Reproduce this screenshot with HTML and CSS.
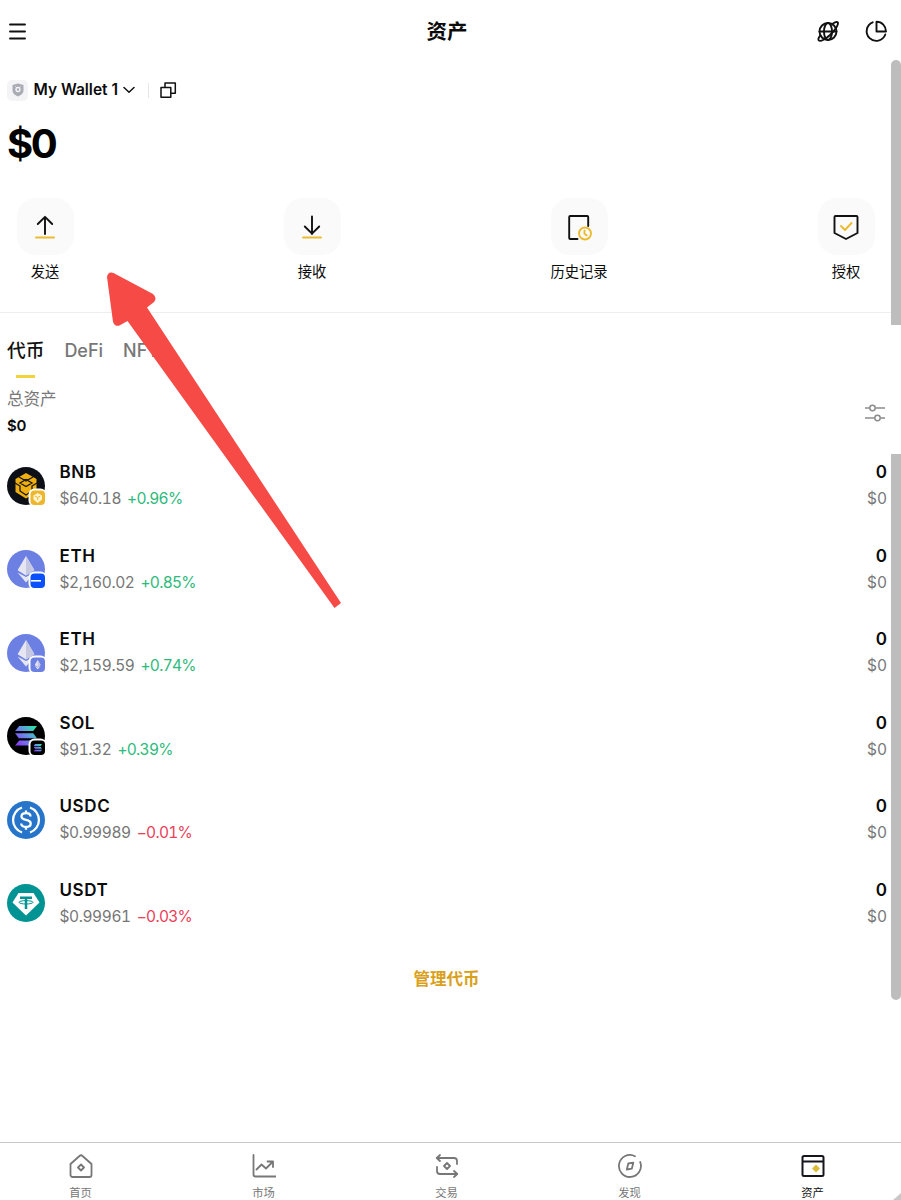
FILE: index.html
```html
<!DOCTYPE html>
<html lang="zh-CN">
<head>
<meta charset="utf-8">
<title>资产</title>
<link rel="stylesheet" href="styles.css">
</head>
<body>
<svg class="defs" aria-hidden="true">
  <defs>
    <linearGradient id="sol" gradientUnits="userSpaceOnUse" x1="2" y1="20" x2="22" y2="1"><stop offset="0" stop-color="#8a3cf5"/><stop offset=".5" stop-color="#6a8bea"/><stop offset="1" stop-color="#2be6a5"/></linearGradient>
    <symbol id="eth" viewBox="0 0 20 32"><path d="M10 0 0 17l10 6 10-6z" fill="#e6e6f2"/><path d="M10 0v23l10-6z" fill="#c6c8e2"/><path d="M0 19.500l10 12 10-12-10 5.500z" fill="#e6e6f2"/></symbol>
    <symbol id="solmark" viewBox="0 0 24 22"><g fill="url(#sol)"><path d="M4.500 0H24l-4 5.500H0z"/><path d="M0 8h20l4 5.500H4z" /><path d="M4.500 16H24l-4 5.500H0z"/></g></symbol>
  </defs>
</svg>
<div class="app">
  <header class="header">
    <svg class="menu" width="22" height="24" viewBox="0 0 22 24"><path d="M3 4.500h15M3 11.500h15M3 18.500h15" class="ink"/></svg>
    <h1>资产</h1>
    <div class="tools">
      <svg width="24" height="24" viewBox="0 0 24 24" class="ink"><circle cx="12" cy="11.500" r="8.500"/><ellipse cx="12" cy="11.500" rx="4" ry="8.500"/><path d="M3.500 11.500h17"/><path d="M17 3.500c3-2 5-2 5-.2.200 3-4 7.700-8 11.700-4 3.800-9.500 7-11.200 5.400-1-1 0-3 1.600-5"/></svg>
      <svg width="24" height="24" viewBox="0 0 24 24" class="ink"><path d="M8.700 2.300A9.600 9.600 0 1 0 21.300 14.500M12.500 1.800v9.700H22c0-5.500-4-9.700-9.500-9.700z"/></svg>
    </div>
  </header>

  <section class="wallet">
    <div class="picker">
      <span class="shield"><svg width="12" height="14" viewBox="0 0 12 14"><path d="M6 .5 11.500 2v5.500c0 3-3 5-5.500 6-2.500-1-5.500-3-5.500-6V2z" fill="#a9abb5"/><circle cx="6" cy="6.500" r="2" fill="none" stroke="#f4f4f7" stroke-width="1.300"/><path d="m3.500 3.500 1.300 1.300m3.700-1.300L7.200 4.800" stroke="#f4f4f7"/></svg></span>
      <span class="name">My Wallet 1</span>
      <svg class="chev" width="12" height="8" viewBox="0 0 12 8"><path d="m1 1.500 5 4.700 5-4.700" class="ink thin"/></svg>
      <i class="bar"></i>
      <svg width="18" height="18" viewBox="0 0 18 18"><path d="M2 6.500h9.800v9.800H2zM6 6V2h10.300v10.300H12.500" class="ink thin"/></svg>
    </div>
    <div class="balance">$0</div>
  </section>

  <section class="actions">
    <div class="action"><span class="tile"><svg width="28" height="28" viewBox="0 0 28 28"><path d="M14 21V4M6.800 11 14 3.800 21.200 11" class="ink"/><path d="M5 24.500h18" class="gold"/></svg></span>发送</div>
    <div class="action"><span class="tile"><svg width="28" height="28" viewBox="0 0 28 28"><path d="M14 3.500V21M6.800 13.500 14 20.700l7.200-7.200" class="ink"/><path d="M5 24.500h18" class="gold"/></svg></span>接收</div>
    <div class="action"><span class="tile"><svg width="28" height="28" viewBox="0 0 28 28"><path d="M12.500 26H5.200a1 1 0 0 1-1-1V4a1 1 0 0 1 1-1h17a1 1 0 0 1 1 1v9" class="ink"/><circle cx="20" cy="20.500" r="6" class="gold"/><path d="M19.500 17.500v3.300l2.200 1.700" class="gold"/></svg></span>历史记录</div>
    <div class="action"><span class="tile"><svg width="28" height="28" viewBox="0 0 28 28"><path d="M3.500 3h21a1 1 0 0 1 1 1v16L14 26 2.500 20V4a1 1 0 0 1 1-1z" class="ink"/><path d="m9 13 4 4 6.500-7" class="gold"/></svg></span>授权</div>
  </section>

  <nav class="tabs"><span class="tab on">代币</span><span class="tab">DeFi</span><span class="tab">NFT</span></nav>

  <section class="summary">
    <div><div class="label">总资产</div><div class="total">$0</div></div>
    <svg width="22" height="20" viewBox="0 0 22 20" fill="none" stroke="#8c8c8c" stroke-width="1.500"><path d="M1 5h4.500m6 0H21M1 15h9.500m6 0H21"/><circle cx="8.500" cy="5" r="2.700"/><circle cx="13.500" cy="15" r="2.700"/></svg>
  </section>

  <section class="tokens">
    <div class="token">
      <svg class="coin" viewBox="0 0 40 40"><circle cx="19" cy="19" r="19" fill="#0d0f16"/><path d="m19 6 10.500 6v13L19 31.500 8.500 25V12z" fill="#f0b010"/><path d="m12 10 7 4 7-4M8 16l5 3v5l6 4 6-4v-5l5-3M13 16l6 3.500 6-3.500-6-3.500z" fill="none" stroke="#17160f" stroke-width="1.300"/><rect x="21.500" y="21.500" width="18" height="18" rx="6" fill="#fff"/><rect x="23.500" y="23.500" width="14.500" height="14.500" rx="4" fill="#edb72d"/><path d="m30.700 26 4.300 2.500v4L30.700 36l-4.300-3.500v-4z" fill="#fff4cf"/><path d="m28 29 2.700 1.500 2.700-1.500M30.700 31v2" fill="none" stroke="#edb72d"/></svg>
      <div class="info"><b>BNB</b><p>$640.18<em class="up">+0.96%</em></p></div><div class="amount"><b>0</b><p>$0</p></div>
    </div>
    <div class="token">
      <svg class="coin" viewBox="0 0 40 40"><circle cx="19" cy="19" r="19" fill="#6c80e3"/><use href="#eth" x="10.500" y="6" width="17" height="27"/><rect x="21.500" y="21.500" width="18" height="18" rx="6" fill="#fff"/><rect x="23.500" y="23.500" width="14.500" height="14.500" rx="4" fill="#0b50fb"/><path d="M24 30.800h10" stroke="#fff" stroke-width="1.600"/></svg>
      <div class="info"><b>ETH</b><p>$2,160.02<em class="up">+0.85%</em></p></div><div class="amount"><b>0</b><p>$0</p></div>
    </div>
    <div class="token">
      <svg class="coin" viewBox="0 0 40 40"><circle cx="19" cy="19" r="19" fill="#6c80e3"/><use href="#eth" x="10.500" y="6" width="17" height="27"/><rect x="21.500" y="21.500" width="18" height="18" rx="6" fill="#fff"/><rect x="23.500" y="23.500" width="14.500" height="14.500" rx="4" fill="#6c80e3"/><use href="#eth" x="27.700" y="26" width="6" height="9.600"/></svg>
      <div class="info"><b>ETH</b><p>$2,159.59<em class="up">+0.74%</em></p></div><div class="amount"><b>0</b><p>$0</p></div>
    </div>
    <div class="token">
      <svg class="coin" viewBox="0 0 40 40"><circle cx="19" cy="19" r="19" fill="#000"/><use href="#solmark" x="8" y="9" width="22" height="20"/><rect x="21.500" y="21.500" width="18" height="18" rx="6" fill="#fff"/><rect x="23.500" y="23.500" width="14.500" height="14.500" rx="4" fill="#000"/><use href="#solmark" x="26.500" y="27" width="8.500" height="7.800"/></svg>
      <div class="info"><b>SOL</b><p>$91.32<em class="up">+0.39%</em></p></div><div class="amount"><b>0</b><p>$0</p></div>
    </div>
    <div class="token">
      <svg class="coin" viewBox="0 0 40 40"><circle cx="19" cy="19" r="19" fill="#2775ca"/><g fill="none" stroke="#fff" stroke-width="2.300"><path d="M15 6.500a13.200 13.200 0 0 0 0 25M23 6.500a13.200 13.200 0 0 1 0 25"/><path d="M23.500 15.500c0-2.200-2-3.300-4.500-3.300s-4.500 1.200-4.500 3.300c0 4.800 9.200 2.100 9.200 7 0 2.200-2.100 3.500-4.700 3.500s-4.800-1.300-4.800-3.500M19 9.500v3m0 13v3.200"/></g></svg>
      <div class="info"><b>USDC</b><p>$0.99989<em class="down">−0.01%</em></p></div><div class="amount"><b>0</b><p>$0</p></div>
    </div>
    <div class="token">
      <svg class="coin" viewBox="0 0 40 40"><circle cx="19" cy="19" r="19" fill="#009393"/><path d="M11.500 9h15L32.500 18.500 19 31.500 5.500 18.500z" fill="#fff"/><path d="M13 13.700h12M19 13.700V25" fill="none" stroke="#009393" stroke-width="2.500"/><ellipse cx="19" cy="18.300" rx="7" ry="1.700" fill="none" stroke="#009393"/></svg>
      <div class="info"><b>USDT</b><p>$0.99961<em class="down">−0.03%</em></p></div><div class="amount"><b>0</b><p>$0</p></div>
    </div>
  </section>
  <div class="manage">管理代币</div>

  <footer class="nav">
    <div class="item"><svg viewBox="0 0 24 24"><path d="M1.500 10 10.500 2a2.200 2.200 0 0 1 3 0l9 8v11a2 2 0 0 1-2 2h-17a2 2 0 0 1-2-2zM12 10.500l3 3-3 3-3-3z"/></svg>首页</div>
    <div class="item"><svg viewBox="0 0 24 24"><path d="M1.500 1v19.500a2 2 0 0 0 2 2H24M4.500 15.500l5-5 4.500 4 7-7M15.500 7.500H21V13"/></svg>市场</div>
    <div class="item"><svg viewBox="0 0 24 24"><path d="M5 1 1.700 4 5 7M2 4h17a3 3 0 0 1 3 3v3M2 13v4a3 3 0 0 0 3 3h17M19 17l3.300 3-3.300 3M12 9l3 3-3 3-3-3z"/></svg>交易</div>
    <div class="item"><svg viewBox="0 0 24 24"><path d="M17 2.200A11 11 0 1 0 22.200 8M10.300 9.500l5-.8-1.500 6-5 .8z"/></svg>发现</div>
    <div class="item on"><svg viewBox="0 0 24 24"><path d="M3 2h18a1.500 1.500 0 0 1 1.500 1.500v17A1.500 1.500 0 0 1 21 22H3a1.500 1.500 0 0 1-1.500-1.500v-17A1.500 1.500 0 0 1 3 2zM2 7.500h20"/><path d="m15 10.500 4 4-4 4-4-4z" class="dot"/></svg>资产</div>
  </footer>

  <i class="scroll upper"></i>
  <i class="scroll lower"></i>
  <svg class="pointer" width="250" height="350" viewBox="0 0 250 350"><path d="M13.500 11 53 32q4.500 4 1 8l-7 5.500L241 341l-6.500 5L27.500 59 19 63.700q-4.500 1-6-4L7 15q1-6 6.500-4z"/></svg>
  <svg class="corner" width="8" height="7" viewBox="0 0 8 7"><path d="M0 7 8 0v7z" fill="#c8c8c8"/></svg>
</div>
</body>
</html>
```
FILE: styles.css
```css
* { box-sizing: border-box; }
body { margin: 0; background: #fff; color: #0b0b0b; font-family: Inter, "Noto Sans CJK SC", sans-serif; }
h1, p { margin: 0; }
em { font-style: normal; }
svg { display: block; flex: none; }
.defs { position: absolute; width: 0; height: 0; }
.app { position: relative; width: 901px; height: 1200px; overflow: hidden; display: flex; flex-direction: column; }
.ink, .gold { fill: none; stroke: #111; stroke-width: 1.900; stroke-linecap: round; stroke-linejoin: round; }
.thin { stroke-width: 1.500; }
.gold { stroke: #eabb2e; }

.header { height: 62px; padding: 1px 13px 0 7px; display: grid; grid-template-columns: 80px 1fr 80px; align-items: center; }
.header h1 { font-size: 20.500px; line-height: 30px; font-weight: 700; text-align: center; padding-right: 1px; }
.tools { display: flex; gap: 24px; justify-content: flex-end; }

.wallet { height: 136px; padding: 17px 7px 0; }
.picker { height: 22px; display: flex; align-items: center; }
.shield { width: 21px; height: 21px; border-radius: 5px; background: #f4f4f7; display: grid; place-items: center; margin-right: 5.500px; }
.name { width: 89px; font-size: 15.500px; line-height: 20px; padding-bottom: 1px; font-weight: 600; white-space: nowrap; }
.bar { width: 1px; height: 15px; background: #e6e6e6; margin: 0 10px 0 13px; }
.balance { margin-top: 20px; font-size: 40px; line-height: 46px; font-weight: 700; letter-spacing: -2.400px; color: #000; }

.actions { height: 115px; padding: 0 25px 0 15px; display: flex; justify-content: space-between; border-bottom: 1px solid #eee; }
.action { width: 60px; display: flex; flex-direction: column; align-items: center; font-size: 14.300px; line-height: 20px; gap: 7px; white-space: nowrap; }
.tile { width: 57px; height: 57px; border-radius: 19px; background: #fafafa; display: grid; place-items: center; }

.tabs { height: 65px; padding: 24px 7px 0; display: flex; gap: 20px; font-size: 18px; line-height: 28px; font-weight: 500; color: #777; }
.tab.on { font-size: 18.700px; color: #111; display: flex; flex-direction: column; align-items: center; }
.tab.on::after { content: ""; width: 19px; height: 3px; margin-top: 9.500px; background: #f1d33b; }

.summary { height: 76px; padding: 10px 15px 0 7px; display: flex; justify-content: space-between; }
.label { font-size: 16.500px; line-height: 22px; color: #777; }
.total { font-size: 15px; line-height: 20px; font-weight: 600; margin-top: 6px; letter-spacing: -.3px; }
.summary svg { margin-top: 15px; }

.token { height: 83.500px; padding: 5px 14px 0 7px; display: flex; }
.coin { width: 40px; height: 40px; margin: 7.500px 12.500px 0 0; }
.info { flex: 1; }
.token b { display: block; font-size: 17px; line-height: 26px; font-weight: 600; }
.info b { letter-spacing: .6px; }
.token p { font-size: 15.500px; line-height: 28px; color: #777; font-variant-numeric: tabular-nums; }
.info p { letter-spacing: -.4px; }
.amount { text-align: right; }
.token em { margin-left: 6px; letter-spacing: -.7px; }
.token .up { color: #2dba7c; }
.token .down { color: #eb4058; }
.manage { margin-top: 8.500px; text-align: center; padding-right: 8px; font-size: 16.500px; line-height: 30px; font-weight: 700; color: #daa01c; }

.nav { margin-top: auto; height: 58px; border-top: 1px solid #c9c9c9; padding: 11px 58.500px 0 50.500px; display: flex; justify-content: space-between; }
.item { width: 60px; display: flex; flex-direction: column; align-items: center; font-size: 11.300px; line-height: 16px; gap: 7px; color: #777; }
.item svg { width: 24px; height: 24px; fill: none; stroke: #777; stroke-width: 1.800; stroke-linecap: round; stroke-linejoin: round; }
.item.on { color: #111; }
.item.on svg { stroke: #15151c; stroke-width: 2; }
.item .dot { fill: #d9bd38; stroke: none; }

.scroll { position: absolute; right: 0; width: 10px; background: #bdbdbd; }
.upper { top: 60px; height: 265px; border-radius: 5px 5px 0 0; }
.lower { top: 454px; height: 546px; border-radius: 0 0 5px 5px; }
.pointer { position: absolute; left: 100px; top: 262px; }
.pointer path { fill: #f64a47; }
.corner { position: absolute; right: 0; bottom: 0; }
```
